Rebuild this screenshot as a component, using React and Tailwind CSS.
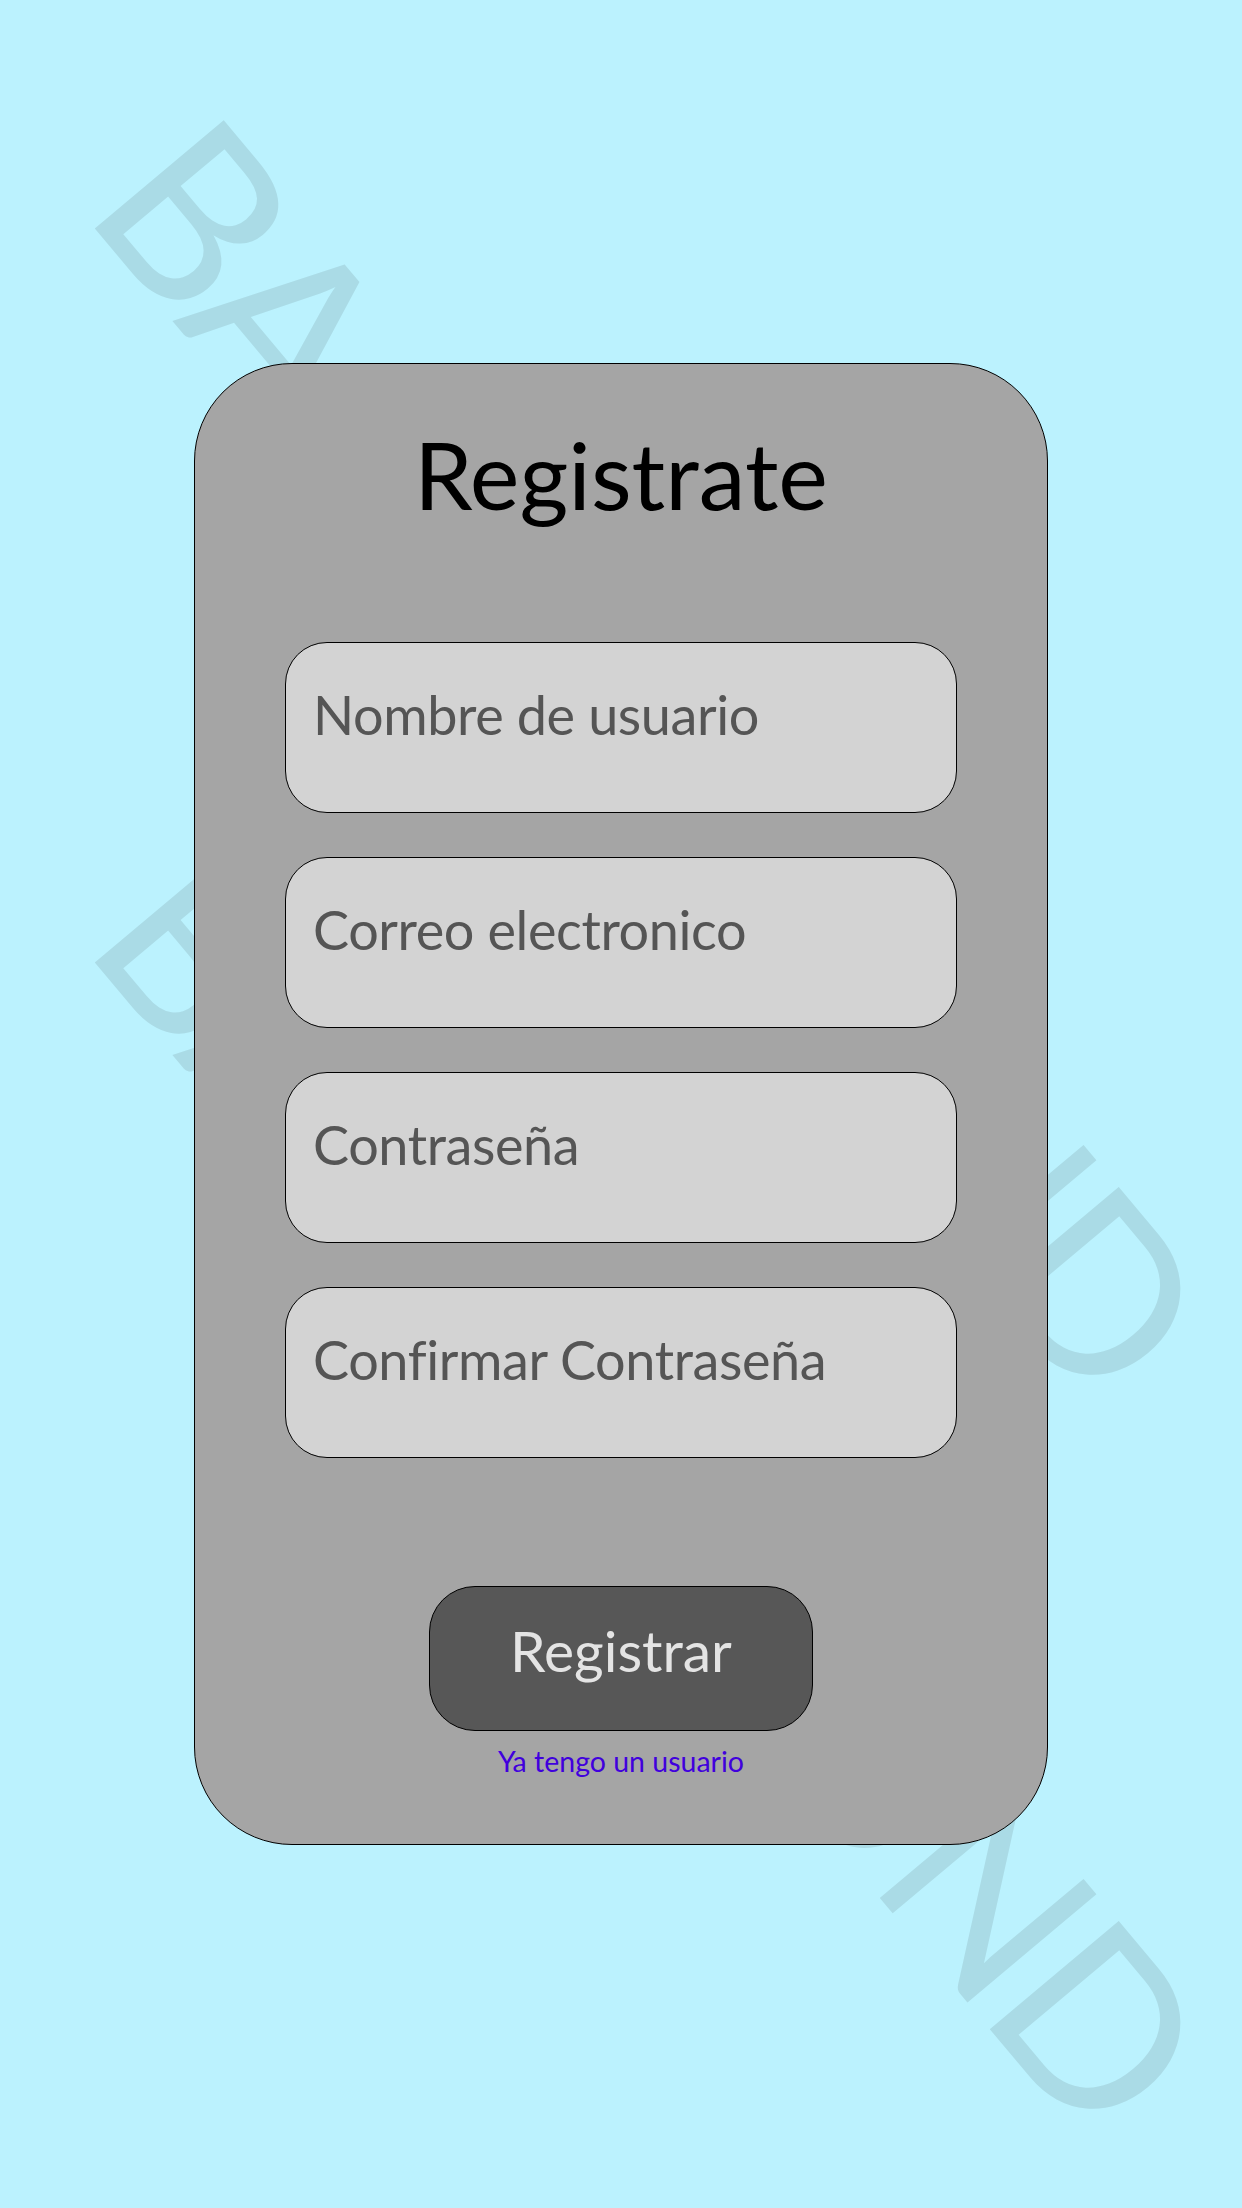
const campos = [
    { name: "usuario", type: "text", placeholder: "Nombre de usuario" },
    { name: "correo", type: "email", placeholder: "Correo electronico" },
    { name: "password", type: "password", placeholder: "Contraseña" },
    { name: "confirmar", type: "password", placeholder: "Confirmar Contraseña" },
];

// Marca de agua diagonal que queda detras de la tarjeta
const Watermark = ({ top }) => (
    <div
        className="absolute left-[81px] whitespace-nowrap text-[235px] leading-none tracking-[-8px] text-[#aadbe6] origin-[0px_208px] rotate-[50deg] select-none pointer-events-none"
        style={{ top }}
        aria-hidden="true"
    >
        BACKGROUND
    </div>
);

const App = () => {
    return (
        <div className="relative min-h-[2208px] w-full overflow-hidden bg-[#bbf2fe] font-[Lato,sans-serif]">
            <Watermark top={4} />
            <Watermark top={738} />

            <div className="relative z-10 flex justify-center pt-[363px]">
                <div className="flex h-[1482px] w-[854px] flex-col items-center rounded-[98px] border border-black bg-[#a5a5a5] pt-[63px]">
                    <h1 className="text-[94px] leading-none text-black">Registrate</h1>

                    <form className="mt-[121px] flex flex-col gap-[44px]">
                        {campos.map((c) => (
                            <input
                                key={c.name}
                                name={c.name}
                                type={c.type}
                                placeholder={c.placeholder}
                                className="h-[171px] w-[672px] rounded-[42px] border border-black bg-[#d3d3d3] pt-[45px] pb-[71px] pl-[27px] text-[54px] leading-[54px] tracking-[-0.4px] text-[#333] outline-none placeholder:text-[#555555]"
                            />
                        ))}
                    </form>

                    <button className="mt-[128px] h-[145px] w-[384px] rounded-[46px] border border-black bg-[#575757] pt-[35px] pb-[51px] text-[57px] leading-[57px] text-[#e4e4e4]">
                        Registrar
                    </button>

                    <a href="#" className="mt-[16px] text-[28.5px] leading-none text-[#4000dd]">
                        Ya tengo un usuario
                    </a>
                </div>
            </div>
        </div>
    );
};

export default App;
